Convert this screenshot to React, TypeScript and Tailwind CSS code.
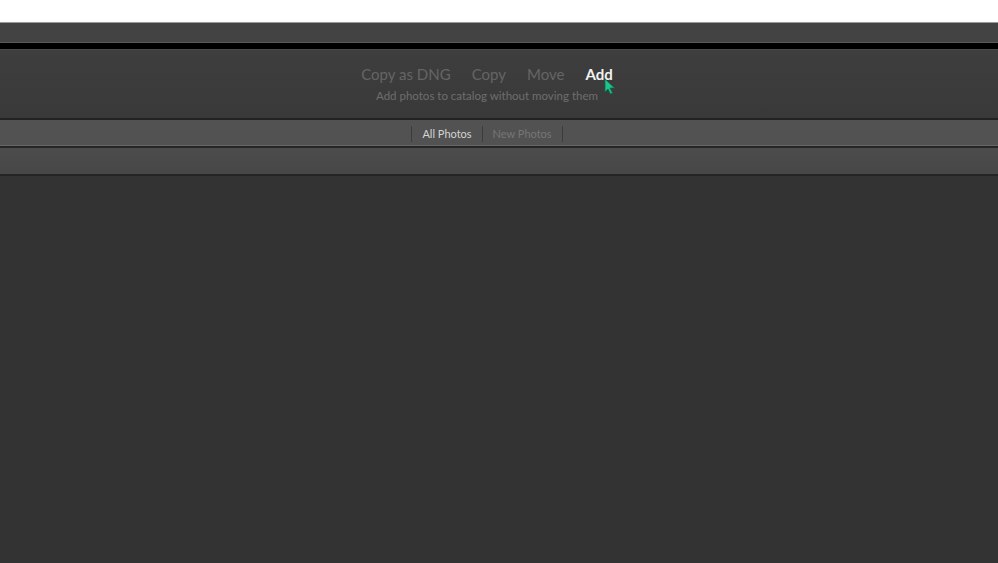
export default function App() {
  const font = { fontFamily: "Lato, 'Open Sans', sans-serif" };
  return (
    <div className="w-[998px] h-[563px] overflow-hidden bg-[#333333] flex flex-col" style={font}>
      {/* white strip at top */}
      <div className="h-[22px] bg-white shrink-0" />
      <div className="h-[1px] bg-[#9a9a9a] shrink-0" />
      <div className="h-[19px] bg-[#434343] shrink-0" />
      <div className="h-[1px] bg-[#5a5a5a] shrink-0" />
      <div className="h-[6px] bg-black shrink-0" />
      <div className="h-[1px] bg-[#4a4a4a] shrink-0" />

      {/* import mode selector */}
      <div className="h-[68px] shrink-0 bg-gradient-to-b from-[#3e3e3e] to-[#393939] flex flex-col items-center pr-[24px]">
        <div className="relative flex items-center gap-[21px] mt-[15px] text-[15px] leading-[18px]">
          <span className="text-[#656565]">Copy as DNG</span>
          <span className="text-[#656565]">Copy</span>
          <span className="text-[#656565]">Move</span>
          <span className="text-[#f2f2f2] font-bold">Add</span>
          <svg
            className="absolute left-[243px] top-[13px]"
            width="12"
            height="17"
            viewBox="0 0 12 17"
          >
            <path d="M1 1 L1 14 L4 11 L6.5 16 L8.5 15 L6 10 L10.5 10 Z" fill="#1fc48a" stroke="#0e6b4a" strokeWidth="0.8" />
          </svg>
        </div>
        <div className="mt-[6px] text-[11.5px] leading-[14px] text-[#6e6e6e]">
          Add photos to catalog without moving them
        </div>
      </div>

      <div className="h-[2px] bg-[#222222] shrink-0" />

      {/* tabs bar */}
      <div className="h-[25px] shrink-0 bg-[#525252] flex items-center justify-center pr-[24px] pt-[3px]">
        <div className="flex items-center text-[11px] leading-[14px]">
          <span className="w-[1px] h-[16px] bg-[#3c3c3c]" />
          <span className="px-[10px] text-[#d4d4d4]">All Photos</span>
          <span className="w-[1px] h-[16px] bg-[#3c3c3c]" />
          <span className="px-[10px] text-[#767676]">New Photos</span>
          <span className="w-[1px] h-[16px] bg-[#3c3c3c]" />
        </div>
      </div>
      <div className="h-[1px] bg-[#666666] shrink-0" />
      <div className="h-[2px] bg-[#262626] shrink-0" />

      {/* second bar */}
      <div className="h-[26px] shrink-0 bg-gradient-to-b from-[#4c4c4c] to-[#474747]" />
      <div className="h-[2px] bg-[#252525] shrink-0" />

      <div className="flex-1 bg-[#333333]" />
    </div>
  );
}
